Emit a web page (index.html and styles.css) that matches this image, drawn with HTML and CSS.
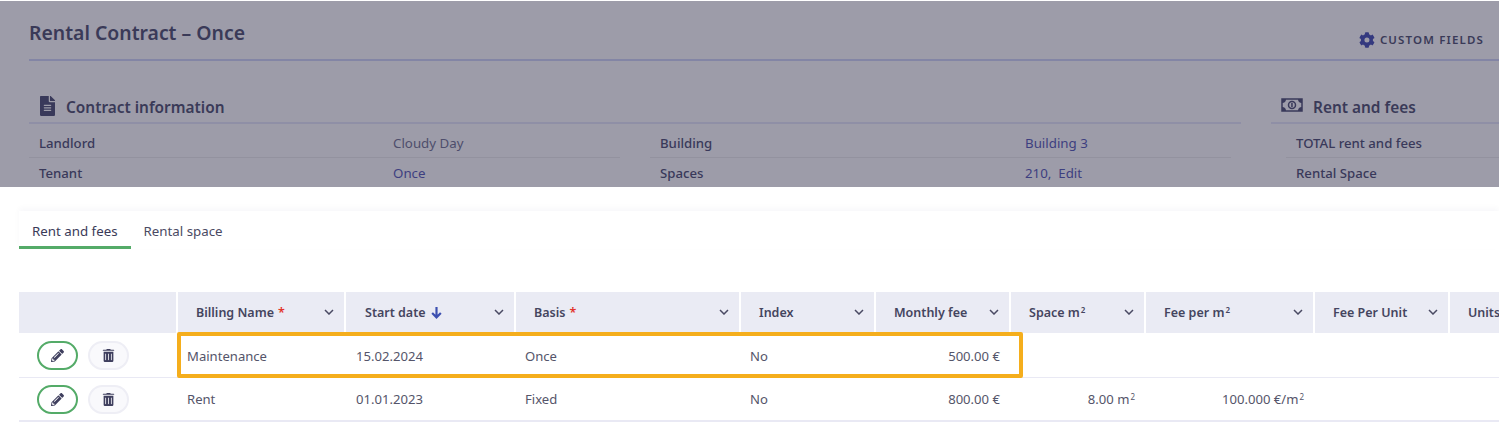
FILE: index.html
```html
<!DOCTYPE html>
<html lang="en">
<head>
<meta charset="utf-8">
<title>Rental Contract – Once</title>
<link rel="stylesheet" href="styles.css">
</head>
<body>
<section class="backdrop">
  <header class="title-bar">
    <h1 class="title">Rental Contract – Once</h1>
    <a class="custom-fields">
      <svg class="gear" viewBox="0 0 512 512"><path d="M487 316l-43-25a196 196 0 0 0 0-70l43-25c5-3 7-9 5-14-11-36-30-68-55-95-4-4-10-5-15-2l-43 25c-18-16-39-28-61-36V24c0-6-4-10-9-11-37-8-75-8-110 0-5 1-9 5-9 11v50c-22 8-43 20-61 36L86 85c-5-3-11-2-15 2-25 27-44 59-55 95-2 5 0 11 5 14l43 25a196 196 0 0 0 0 70l-43 25c-5 3-7 9-5 14 11 36 30 68 55 95 4 4 10 5 15 2l43-25c18 16 39 28 61 36v50c0 6 4 10 9 11 37 8 75 8 110 0 5-1 9-5 9-11v-50c22-8 43-20 61-36l43 25c5 3 11 2 15-2 25-27 44-59 55-95 2-5 0-11-5-14zM254 336a80 80 0 1 1 0-160 80 80 0 0 1 0 160z"/></svg>
      <span>CUSTOM FIELDS</span>
    </a>
  </header>
  <div class="panels">
    <div class="panel panel-contract">
      <h2 class="panel-title">
        <svg class="doc-icon" viewBox="0 0 384 512"><path d="M224 136V0H24C11 0 0 11 0 24v464c0 13 11 24 24 24h336c13 0 24-11 24-24V160H248c-13 0-24-11-24-24zm64 236c0 7-5 12-12 12H108c-7 0-12-5-12-12v-8c0-7 5-12 12-12h168c7 0 12 5 12 12zm0-64c0 7-5 12-12 12H108c-7 0-12-5-12-12v-8c0-7 5-12 12-12h168c7 0 12 5 12 12zm0-72v8c0 7-5 12-12 12H108c-7 0-12-5-12-12v-8c0-7 5-12 12-12h168c7 0 12 5 12 12zm96-114v6H256V0h6c6 0 12 3 17 7l98 98c4 5 7 11 7 17z"/></svg>
        Contract information
      </h2>
      <div class="info-grid">
        <div class="info-row">
          <span class="label">Landlord</span><span class="value value-plain">Cloudy Day</span>
        </div>
        <div class="info-row info-right">
          <span class="label">Building</span><span class="value">Building 3</span>
        </div>
        <div class="info-row">
          <span class="label">Tenant</span><span class="value">Once</span>
        </div>
        <div class="info-row info-right">
          <span class="label">Spaces</span><span class="value">210,&nbsp; Edit</span>
        </div>
      </div>
    </div>
    <div class="panel panel-rent">
      <h2 class="panel-title">
        <svg class="money-icon" viewBox="0 0 22 14"><path class="money-frame" d="M1 1h20v12H1z"/><path d="M1 1h4a4 4 0 0 1-4 4zM21 1h-4a4 4 0 0 0 4 4zM1 13h4a4 4 0 0 0-4-4zM21 13h-4a4 4 0 0 1 4-4z"/><circle class="money-frame" cx="11" cy="7" r="3.500"/><path d="M10.200 5h1.500v4h-1.500z"/></svg>
        Rent and fees
      </h2>
      <div class="rent-rows">
        <div class="info-row rent-row"><span class="label">TOTAL rent and fees</span></div>
        <div class="info-row rent-row"><span class="label">Rental Space</span></div>
      </div>
    </div>
  </div>
</section>

<main class="content">
  <nav class="tabs">
    <a class="tab tab-active">Rent and fees</a>
    <a class="tab">Rental space</a>
  </nav>

  <div class="table">
    <div class="thead">
      <div class="th"></div>
      <div class="th"><span class="th-label">Billing Name <i class="req">*</i></span><svg class="chev" viewBox="0 0 10 6"><path d="M1 1l4 4 4-4"/></svg></div>
      <div class="th"><span class="th-label">Start date <svg class="sort" viewBox="0 0 12 12"><path d="M6 1v9M2 6.500L6 10.500l4-4"/></svg></span><svg class="chev" viewBox="0 0 10 6"><path d="M1 1l4 4 4-4"/></svg></div>
      <div class="th"><span class="th-label">Basis <i class="req">*</i></span><svg class="chev" viewBox="0 0 10 6"><path d="M1 1l4 4 4-4"/></svg></div>
      <div class="th"><span class="th-label">Index</span><svg class="chev" viewBox="0 0 10 6"><path d="M1 1l4 4 4-4"/></svg></div>
      <div class="th"><span class="th-label">Monthly fee</span><svg class="chev" viewBox="0 0 10 6"><path d="M1 1l4 4 4-4"/></svg></div>
      <div class="th"><span class="th-label"><span>Space m<sup>2</sup></span></span><svg class="chev" viewBox="0 0 10 6"><path d="M1 1l4 4 4-4"/></svg></div>
      <div class="th"><span class="th-label"><span>Fee per m<sup>2</sup></span></span><svg class="chev" viewBox="0 0 10 6"><path d="M1 1l4 4 4-4"/></svg></div>
      <div class="th"><span class="th-label">Fee Per Unit</span><svg class="chev" viewBox="0 0 10 6"><path d="M1 1l4 4 4-4"/></svg></div>
      <div class="th"><span class="th-label">Units</span></div>
    </div>

    <div class="tr">
      <div class="td td-actions">
        <button class="btn btn-edit"><svg class="btn-icon" viewBox="0 0 512 512"><path d="M497 142l-46 46c-5 5-12 5-17 0L324 78c-5-5-5-12 0-17l46-46c19-19 49-19 68 0l59 59c19 19 19 49 0 68zM284 101L22 363 1 484c-3 16 11 30 28 27l121-21 262-262c5-5 5-12 0-17L301 101c-5-5-12-5-17 0zM124 340c-6-6-6-15 0-21l154-154c6-6 15-6 21 0s6 15 0 21L145 340c-6 6-15 6-21 0zm-36 84h48v36l-65 12-31-32 12-64h36z"/></svg></button>
        <button class="btn btn-delete"><svg class="btn-icon" viewBox="0 0 448 512"><path d="M432 32H312l-9-19A24 24 0 0 0 281 0H167a24 24 0 0 0-21 13l-10 19H16A16 16 0 0 0 0 48v16a8 8 0 0 0 8 8h432a8 8 0 0 0 8-8V48a16 16 0 0 0-16-16zM32 104v360a48 48 0 0 0 48 48h288a48 48 0 0 0 48-48V104zm96 320a16 16 0 0 1-32 0V192a16 16 0 0 1 32 0zm112 0a16 16 0 0 1-32 0V192a16 16 0 0 1 32 0zm112 0a16 16 0 0 1-32 0V192a16 16 0 0 1 32 0z"/></svg></button>
      </div>
      <div class="td">Maintenance</div>
      <div class="td td-date">15.02.2024</div>
      <div class="td">Once</div>
      <div class="td">No</div>
      <div class="td td-num">500.00 €</div>
      <div class="td td-num"></div>
      <div class="td td-num"></div>
      <div class="td"></div>
      <div class="td"></div>
    </div>

    <div class="tr tr-last">
      <div class="td td-actions">
        <button class="btn btn-edit"><svg class="btn-icon" viewBox="0 0 512 512"><path d="M497 142l-46 46c-5 5-12 5-17 0L324 78c-5-5-5-12 0-17l46-46c19-19 49-19 68 0l59 59c19 19 19 49 0 68zM284 101L22 363 1 484c-3 16 11 30 28 27l121-21 262-262c5-5 5-12 0-17L301 101c-5-5-12-5-17 0zM124 340c-6-6-6-15 0-21l154-154c6-6 15-6 21 0s6 15 0 21L145 340c-6 6-15 6-21 0zm-36 84h48v36l-65 12-31-32 12-64h36z"/></svg></button>
        <button class="btn btn-delete"><svg class="btn-icon" viewBox="0 0 448 512"><path d="M432 32H312l-9-19A24 24 0 0 0 281 0H167a24 24 0 0 0-21 13l-10 19H16A16 16 0 0 0 0 48v16a8 8 0 0 0 8 8h432a8 8 0 0 0 8-8V48a16 16 0 0 0-16-16zM32 104v360a48 48 0 0 0 48 48h288a48 48 0 0 0 48-48V104zm96 320a16 16 0 0 1-32 0V192a16 16 0 0 1 32 0zm112 0a16 16 0 0 1-32 0V192a16 16 0 0 1 32 0zm112 0a16 16 0 0 1-32 0V192a16 16 0 0 1 32 0z"/></svg></button>
      </div>
      <div class="td">Rent</div>
      <div class="td td-date">01.01.2023</div>
      <div class="td">Fixed</div>
      <div class="td">No</div>
      <div class="td td-num">800.00 €</div>
      <div class="td td-num"><span>8.00 m<sup>2</sup></span></div>
      <div class="td td-num"><span>100.000 €/m<sup>2</sup></span></div>
      <div class="td"></div>
      <div class="td"></div>
    </div>

    <div class="highlight"></div>
  </div>
</main>
</body>
</html>
```

FILE: styles.css
```css
* { box-sizing: border-box; }

html, body {
  margin: 0;
  height: 442px;
  overflow: hidden;
  background: #fff;
}

body {
  font-family: "Noto Sans", "Open Sans", sans-serif;
  font-size: 13px;
  color: #4d4d63;
}

/* dimmed upper part */
.backdrop {
  height: 186px;
  margin-top: 1px;
  background: #9d9ca9;
  color: #39395a;
  overflow: hidden;
}

.title-bar {
  display: flex;
  justify-content: space-between;
  align-items: flex-end;
  height: 60px;
  margin-left: 29px;
  border-bottom: 2px solid #8385a5;
}

.title {
  margin: 0;
  align-self: flex-start;
  padding-top: 18px;
  font-size: 19.400px;
  line-height: 28px;
  font-weight: 600;
  color: #3a3a58;
}

.custom-fields {
  display: flex;
  align-items: center;
  gap: 5px;
  margin-right: 15px;
  padding-bottom: 11px;
  font-size: 11.500px;
  font-weight: 600;
  letter-spacing: 1.150px;
  line-height: 16px;
  color: #3a3a58;
}

.gear { width: 16px; height: 16px; fill: #34397f; }

.panels {
  display: flex;
  gap: 30px;
  padding: 31px 0 0 29px;
}

.panel-contract { width: 1212px; flex: none; }
.panel-rent { flex: 1; }

.panel-title {
  display: flex;
  align-items: center;
  height: 32px;
  margin: 0;
  padding: 1px 0 0 10px;
  border-bottom: 2px solid #8f8fa6;
  font-size: 15.400px;
  font-weight: 600;
  color: #3a3a58;
}

.doc-icon { width: 17px; height: 20px; margin-right: 10px; margin-top: -3px; fill: #39395a; }

.money-icon { width: 22px; height: 14px; margin-right: 10px; margin-top: -5px; fill: #39395a; }
.money-frame { fill: none; stroke: #39395a; stroke-width: 1.500; }

.info-grid {
  display: grid;
  grid-template-columns: 591px 581px;
  column-gap: 30px;
  margin-top: 4px;
}

.info-row {
  display: flex;
  align-items: center;
  height: 30px;
  padding-left: 10px;
  border-bottom: 1px solid #93929f;
  font-size: 13.300px;
}

.info-row:nth-child(n+3) { border-bottom: 0; }

.label { width: 354px; flex: none; font-size: 13.200px; font-weight: 500; }
.info-right .label { width: 365px; }
.value { color: #3d3f80; font-size: 13.300px; }
.value-plain { color: #4e4e6c; }

.rent-rows { margin-top: 4px; }
.rent-row { margin-left: 15px; }
.rent-row:last-child { border-bottom: 0; }

/* lower part */
.content {
  padding: 24px 0 0 19px;
}

.tabs {
  display: flex;
  height: 38px;
  box-shadow: 0 -3px 6px rgba(40, 40, 90, 0.03);
}

.tab {
  height: 38px;
  padding: 10px 13px 0;
  font-size: 13.300px;
  line-height: 20px;
  color: #4a4a63;
}

.tab-active {
  border-bottom: 3px solid #54ab68;
  color: #3a3a58;
}

.table {
  position: relative;
  margin-top: 43px;
}

.thead,
.tr {
  display: grid;
  grid-template-columns: 157px 166px 168px 223px 133px 133px 133px 167px 133px 60px;
  column-gap: 2px;
}

.thead { height: 41px; }

.th {
  display: flex;
  align-items: center;
  justify-content: space-between;
  padding: 0 10px 0 18px;
  background: #eaebf4;
  font-size: 12.500px;
  font-weight: 600;
  color: #45455f;
  white-space: nowrap;
}

.th:nth-child(3) { padding-left: 19px; }

.th-label { display: inline-flex; align-items: center; gap: 4px; }

sup {
  font-size: 8px;
  line-height: 0;
  vertical-align: 4px;
  margin-left: 1px;
}

.req {
  color: #e2332b;
  font-style: normal;
  font-weight: 600;
}

.chev {
  width: 10px;
  height: 6px;
  margin-top: -2px;
  fill: none;
  stroke: #4a4a63;
  stroke-width: 1.500;
}

.sort {
  width: 13px;
  height: 13px;
  fill: none;
  stroke: #3c4fb0;
  stroke-width: 2;
}

.tr {
  height: 45px;
  border-bottom: 1px solid #e9e9f4;
}

.tr-last {
  height: 44px;
  border-bottom-width: 2px;
}

.tr-last .td:not(.td-actions) { padding-top: 0; }

.td {
  display: flex;
  align-items: center;
  padding: 2px 8px 0 9px;
  font-size: 13.100px;
  color: #55556a;
  white-space: nowrap;
}

.td.td-date { padding-left: 10px; }
.td-num { justify-content: flex-end; padding-right: 9px; }

.td-actions {
  gap: 10px;
  padding: 0 0 0 18px;
}

.btn {
  display: flex;
  align-items: center;
  justify-content: center;
  width: 41px;
  height: 29px;
  padding: 0;
  border-radius: 15px;
  background: #fff;
  cursor: pointer;
}

.btn-edit { border: 2px solid #54ab68; }
.btn-delete { border: 2px solid #eeeef5; background: #f9f9fc; }

.btn-icon { width: 13px; height: 13px; fill: #3f3f5e; }

.highlight {
  position: absolute;
  left: 158px;
  top: 40px;
  width: 846px;
  height: 46px;
  border: 4px solid #f5ae1c;
  border-radius: 2px;
  pointer-events: none;
}
```
